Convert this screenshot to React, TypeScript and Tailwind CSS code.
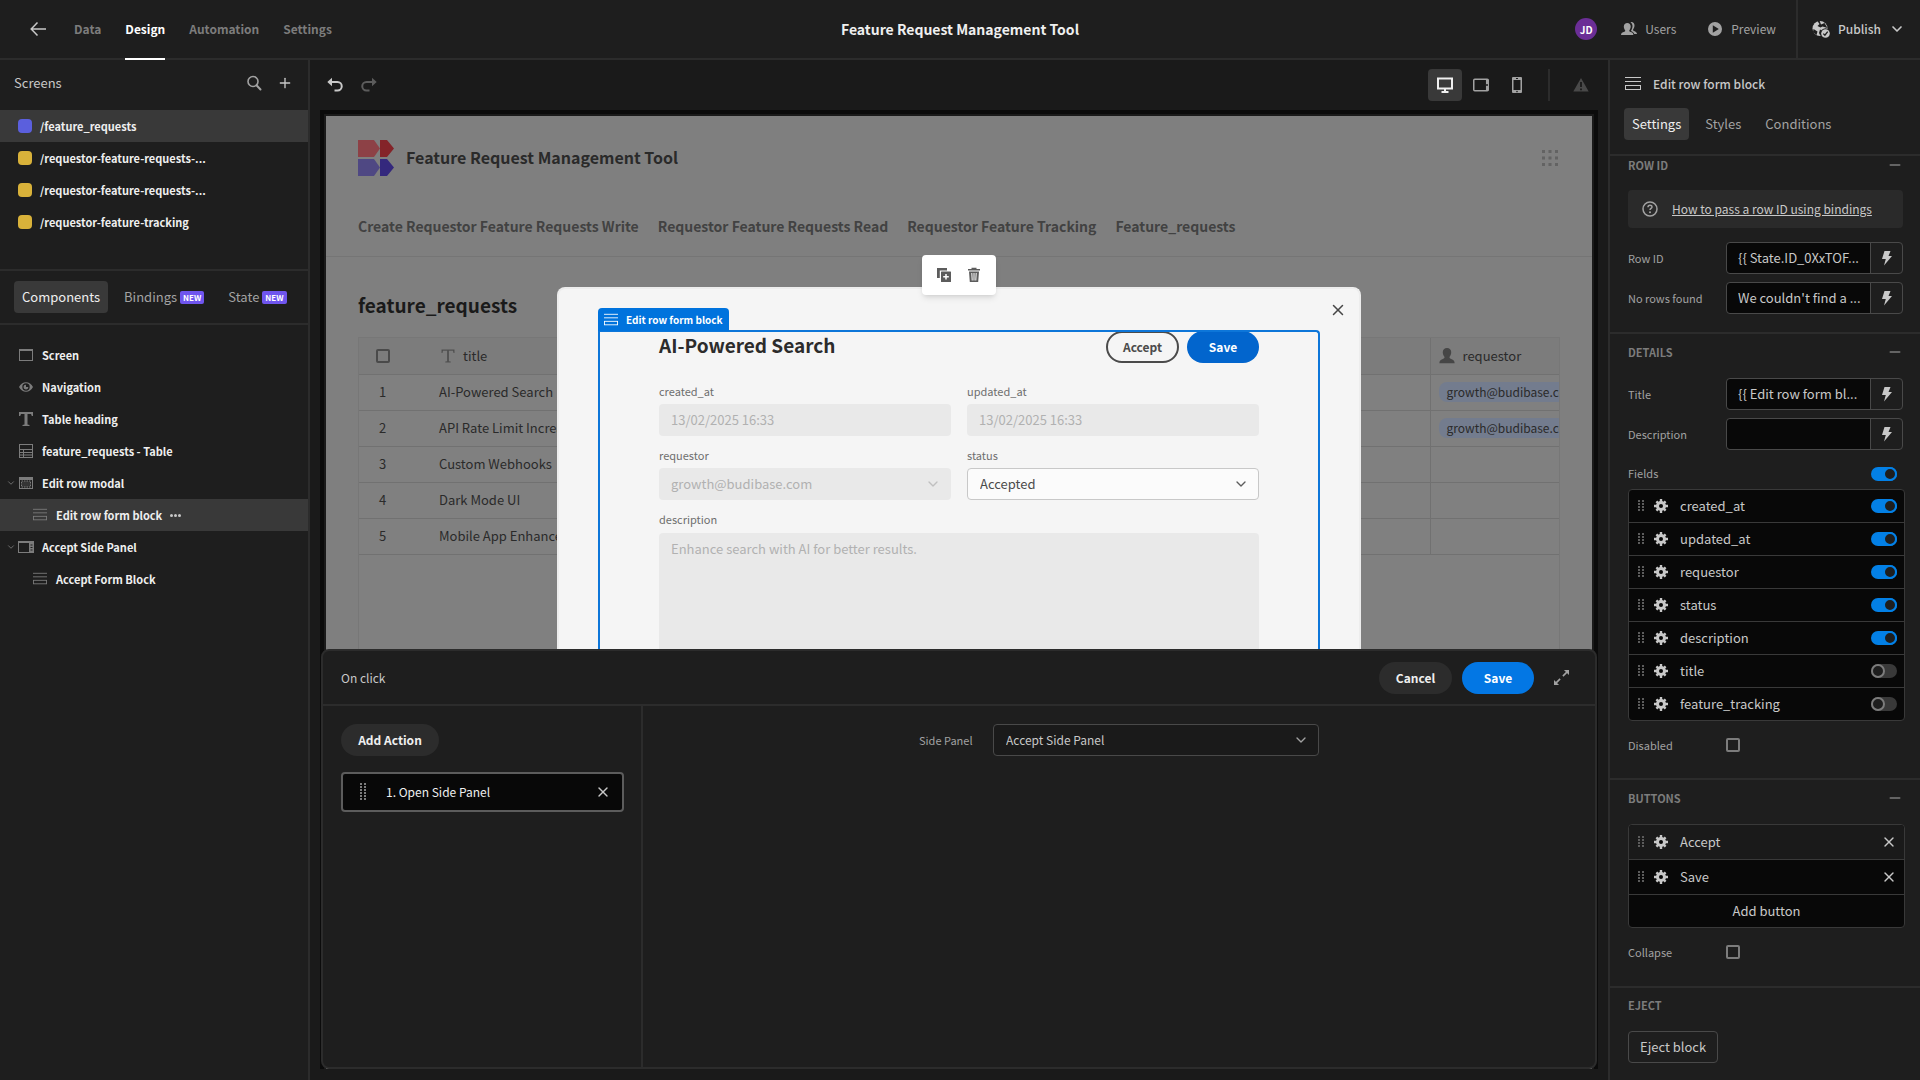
import React from 'react';
import { ChevronDown, Minus, Plus, X } from 'lucide-react';

type IconProps = { className?: string };

const BackIcon: React.FC<IconProps> = ({ className = 'w-4 h-4' }) => (
  <svg viewBox="0 0 16 16" fill="none" stroke="currentColor" strokeWidth="1.500" className={className} aria-hidden="true">
    <path d="M1 8h15M7.500 1.500L1.200 8l6.300 6.500" />
  </svg>
);

const FormIcon: React.FC<IconProps> = ({ className = 'w-4 h-4' }) => (
  <svg viewBox="0 0 16 16" fill="none" stroke="currentColor" className={className} aria-hidden="true">
    <path d="M0 1.5h16M0 5.5h16" />
    <rect x="0.5" y="9.5" width="15" height="4" />
  </svg>
);

const ScreenIcon: React.FC<IconProps> = ({ className = 'w-3.5 h-3.5' }) => (
  <svg viewBox="0 0 14 14" fill="none" stroke="currentColor" className={className} aria-hidden="true">
    <path d="M0 1h14v2H0z" fill="currentColor" stroke="none" />
    <rect x="0.5" y="1.5" width="13" height="11" />
  </svg>
);

const EyeIcon: React.FC<IconProps> = ({ className = 'w-3.5 h-3.5' }) => (
  <svg viewBox="0 0 14 14" className={className} aria-hidden="true">
    <path d="M0 7C1.500 3.800 4.200 2.200 7 2.200S12.500 3.800 14 7C12.500 10.200 9.800 11.800 7 11.800S1.500 10.200 0 7z" fill="currentColor" />
    <circle cx="7" cy="7" r="3.700" fill="#1e1e1e" />
    <path d="M7 7V4.700A2.400 2.400 0 1 0 9.300 7z" fill="currentColor" />
  </svg>
);

const TextIcon: React.FC<IconProps> = ({ className = 'w-3.5 h-3.5' }) => (
  <svg viewBox="0 0 14 14" fill="currentColor" className={className} aria-hidden="true">
    <path d="M0 0h14v4h-1.200L12 2H8.500v10.500l2 .5v1h-7v-1l2-.5V2H2l-.8 2H0z" />
  </svg>
);

const TextThinIcon: React.FC<IconProps> = ({ className = 'w-3.5 h-3.5' }) => (
  <svg viewBox="0 0 14 14" fill="currentColor" className={className} aria-hidden="true">
    <path d="M0.500 0.500h13v3.500h-1l-.5-2.200H7.900V12.300l1.800.3v.9H4.300v-.9l1.800-.3V1.800H2L1.500 4h-1z" />
  </svg>
);

const TableIcon: React.FC<IconProps> = ({ className = 'w-3.5 h-3.5' }) => (
  <svg viewBox="0 0 14 14" fill="none" stroke="currentColor" className={className} aria-hidden="true">
    <rect x="0.5" y="0.5" width="13" height="13" />
    <path d="M1 5.500h12M1 8.500h12M1 11h12M4.500 6v7.500" />
  </svg>
);

const ModalIcon: React.FC<IconProps> = ({ className = 'w-3.5 h-3.5' }) => (
  <svg viewBox="0 0 14 14" fill="none" stroke="currentColor" className={className} aria-hidden="true">
    <path d="M0 1h14v3H0z" fill="currentColor" stroke="none" />
    <rect x="0.5" y="1.5" width="13" height="11" />
    <rect x="2.5" y="5" width="9" height="6" fill="currentColor" fillOpacity="0.25" strokeDasharray="1.500 1" />
  </svg>
);

const SidePanelIcon: React.FC<IconProps> = ({ className = 'w-4 h-3.5' }) => (
  <svg viewBox="0 0 16 14" fill="none" stroke="currentColor" className={className} aria-hidden="true">
    <path d="M0 1h16v2H0z" fill="currentColor" stroke="none" />
    <rect x="0.5" y="1.5" width="15" height="11" />
    <path d="M11 3h5v10h-5z" fill="currentColor" stroke="none" />
    <path d="M12.500 5h2M12.500 7.500h2M12.500 10h2" stroke="#1e1e1e" />
  </svg>
);

const SearchIcon: React.FC<IconProps> = ({ className = 'w-4 h-4' }) => (
  <svg viewBox="0 0 16 16" fill="none" stroke="currentColor" strokeWidth="1.600" className={className} aria-hidden="true">
    <circle cx="7" cy="6.500" r="5" />
    <path d="M10.500 10.300l4 4.200" strokeWidth="2" strokeLinecap="round" />
  </svg>
);

const UndoIcon: React.FC<IconProps> = ({ className = 'w-4 h-4' }) => (
  <svg viewBox="0 0 16 16" fill="none" stroke="currentColor" strokeWidth="2" className={className} aria-hidden="true">
    <path d="M4 5h6.500a4 4 0 0 1 0 8.500H7.500" />
    <path d="M5 0.800v8.400L0.300 5z" fill="currentColor" stroke="none" />
  </svg>
);

const DesktopIcon: React.FC<IconProps> = ({ className = 'w-4 h-4' }) => (
  <svg viewBox="0 0 16 16" fill="none" stroke="currentColor" strokeWidth="2" className={className} aria-hidden="true">
    <rect x="1" y="1.500" width="14" height="10" />
    <path d="M8 12v2M4.500 15h7" />
  </svg>
);

const TabletIcon: React.FC<IconProps> = ({ className = 'w-4 h-4' }) => (
  <svg viewBox="0 0 16 16" fill="none" stroke="currentColor" strokeWidth="1.500" className={className} aria-hidden="true">
    <rect x="0.750" y="2.200" width="14.500" height="11.500" rx="1" />
    <path d="M14.200 2.500v11" strokeWidth="2.500" />
    <circle cx="14" cy="8" r="1" fill="#1a1a1a" stroke="none" />
  </svg>
);

const PhoneIcon: React.FC<IconProps> = ({ className = 'w-4 h-4' }) => (
  <svg viewBox="0 0 16 16" fill="currentColor" className={className} aria-hidden="true">
    <path fillRule="evenodd" d="M4 0h8a1 1 0 0 1 1 1v14a1 1 0 0 1-1 1H4a1 1 0 0 1-1-1V1a1 1 0 0 1 1-1zM4.500 3v10h7V3zM7 1v1h2V1zM8 13.800a.8.8 0 1 0 0 1.600.8.8 0 0 0 0-1.600z" />
  </svg>
);

const AlertIcon: React.FC<IconProps> = ({ className = 'w-4 h-4' }) => (
  <svg viewBox="0 0 16 16" className={className} aria-hidden="true">
    <path d="M8 1l7.700 13.500H0.300z" fill="currentColor" />
    <path d="M8 5v5M8 11.500v1.800" stroke="#1a1a1a" strokeWidth="1.800" />
  </svg>
);

const UsersIcon: React.FC<IconProps> = ({ className = 'w-4 h-4' }) => (
  <svg viewBox="0 0 16 16" fill="currentColor" className={className} aria-hidden="true">
    <path d="M9.500 1.200c2.400-.5 4 1 4 3.300 0 1.500-.6 2.800-1.300 3.700-.3.800 0 1.300.8 1.700 1.700.8 3 1.400 3 3.100h-2.800c-.4-1.700-1.700-2.400-3.300-3.100 1-1.400 1.600-3 1.600-4.800 0-1.600-.7-3-2-3.900z" />
    <path d="M6.300 2C8.300 2 9.700 3.300 9.700 5.500c0 1.500-.6 2.800-1.300 3.700-.3.700 0 1.200.8 1.500 1.900.7 3.200 1.200 3.200 3.300H0c0-2.100 1.500-2.600 3.300-3.300.8-.3 1.100-.8.800-1.500C3.400 8.300 2.800 7 2.800 5.500 2.800 3.300 4.300 2 6.300 2z" />
  </svg>
);

const UserIcon: React.FC<IconProps> = ({ className = 'w-3.5 h-3.5' }) => (
  <svg viewBox="0 0 14 14" fill="currentColor" className={className} aria-hidden="true">
    <path d="M7 0c2.300 0 3.700 1.500 3.700 3.800 0 1.500-.6 2.900-1.400 3.900-.3.800 0 1.300.9 1.600 2 .8 3.500 1.500 3.500 4H.3c0-2.500 1.500-3.200 3.500-4 .9-.3 1.200-.8.900-1.600-.8-1-1.400-2.400-1.400-3.900C3.300 1.500 4.700 0 7 0z" />
  </svg>
);

const PlayIcon: React.FC<IconProps> = ({ className = 'w-3.5 h-3.5' }) => (
  <svg viewBox="0 0 14 14" fill="currentColor" className={className} aria-hidden="true">
    <path fillRule="evenodd" d="M7 0a7 7 0 1 1 0 14A7 7 0 0 1 7 0zM4.800 3.300v7.400L10.800 7z" />
  </svg>
);

const GlobeIcon: React.FC<IconProps> = ({ className = 'w-[18px] h-[18px]' }) => (
  <svg viewBox="0 0 18 18" className={className} aria-hidden="true">
    <circle cx="8" cy="8.500" r="7.500" fill="currentColor" />
    <path d="M5 0.500L7.500 4 5.500 6l3 1.500 2-1 5 1.500-3-5L9 4.500 7.500 0.500zM1.500 9l4 2.500L4.500 15 1 12zM8 9.500l2 1-1.500 5.500L7 13z" fill="#1e1e1e" />
    <circle cx="13.500" cy="13.500" r="5.200" fill="#1e1e1e" />
    <circle cx="13.500" cy="13.500" r="4.300" fill="currentColor" />
    <path d="M11.300 13.600l1.600 1.600 2.800-3.500" stroke="#1e1e1e" strokeWidth="1.300" fill="none" />
  </svg>
);

const BoltIcon: React.FC<IconProps> = ({ className = 'w-4 h-4' }) => (
  <svg viewBox="0 0 16 16" fill="currentColor" className={className} aria-hidden="true">
    <path d="M5.500 1h6L9.500 6H13L5 15.500 6.800 9H3z" />
  </svg>
);

const GearIcon: React.FC<IconProps> = ({ className = 'w-3.5 h-3.5' }) => (
  <svg viewBox="-7 -7 14 14" className={className} aria-hidden="true">
    <path d="M0-7V7M-7 0H7M-4.600-4.600L4.600 4.600M-4.600 4.600L4.600-4.600" stroke="currentColor" strokeWidth="2.400" />
    <circle r="5" fill="currentColor" />
    <circle r="2" fill="#080808" />
  </svg>
);

const DragIcon: React.FC<IconProps & { rows?: number }> = ({ className = 'w-1.5 h-3', rows = 4 }) => (
  <svg viewBox={`0 0 6 ${rows * 3}`} fill="currentColor" className={className} aria-hidden="true">
    {Array.from({ length: rows }, (_, i) => (
      <path key={i} d={`M0 ${i * 3}h2v2H0zM4 ${i * 3}h2v2H4z`} />
    ))}
  </svg>
);

const HelpIcon: React.FC<IconProps> = ({ className = 'w-4 h-4' }) => (
  <svg viewBox="0 0 16 16" fill="none" stroke="currentColor" strokeWidth="1.500" className={className} aria-hidden="true">
    <circle cx="8" cy="8" r="7" />
    <path d="M6 6.200c0-2.600 4-2.400 4-.3 0 1.500-2 1.500-2 3.200" />
    <circle cx="8" cy="11.200" r="1" fill="currentColor" stroke="none" />
  </svg>
);

const DuplicateIcon: React.FC<IconProps> = ({ className = 'w-4 h-4' }) => (
  <svg viewBox="0 0 16 16" fill="none" className={className} aria-hidden="true">
    <path d="M1 11V1h10v2.500H3.800V11z" fill="currentColor" />
    <rect x="5" y="4.500" width="10" height="10.500" rx="0.500" fill="currentColor" />
    <path d="M10 7v5.500M7.200 9.800h5.600" stroke="#fff" strokeWidth="1.500" />
  </svg>
);

const TrashIcon: React.FC<IconProps> = ({ className = 'w-4 h-4' }) => (
  <svg viewBox="0 0 16 16" className={className} aria-hidden="true">
    <path d="M5.500 2V.8h5V2H14v1.500H2V2zM3 4.500h10L12.200 15H3.800z" fill="currentColor" />
    <path d="M5.800 6l.4 7.500M8 6v7.500M10.200 6l-.4 7.500" stroke="#fff" strokeWidth="1" />
  </svg>
);

const ExpandIcon: React.FC<IconProps> = ({ className = 'w-3.5 h-3.5' }) => (
  <svg viewBox="0 0 14 14" fill="none" stroke="currentColor" className={className} aria-hidden="true">
    <path d="M8.300 5.700L12 2M5.700 8.300L2 12" strokeWidth="1.500" />
    <path d="M9.300 0H14v4.700zM4.700 14H0V9.300z" fill="currentColor" stroke="none" />
  </svg>
);

const LogoMark: React.FC = () => (
  <svg viewBox="0 0 36 36" className="w-9 h-9" aria-hidden="true">
    <path d="M0 0h16l6 8.500L16 17H0z" fill="#8d4146" />
    <path d="M22 0h7l7 8.500L29 17h-7z" fill="#842429" />
    <path d="M0 19h16l6 8.500L16 36H0z" fill="#4f4883" />
    <path d="M22 19h7l7 8.500L29 36h-7z" fill="#34287d" />
  </svg>
);

const navTabs = ['Data', 'Design', 'Automation', 'Settings'];

const screens = [
  { path: '/feature_requests', color: 'bg-[#5b5fdd]', active: true },
  { path: '/requestor-feature-requests-...', color: 'bg-[#d9b23a]', active: false },
  { path: '/requestor-feature-requests-...', color: 'bg-[#d9b23a]', active: false },
  { path: '/requestor-feature-tracking', color: 'bg-[#d9b23a]', active: false }
];

const tree = [
  { label: 'Screen', icon: <ScreenIcon />, open: false, nested: false, active: false },
  { label: 'Navigation', icon: <EyeIcon />, open: false, nested: false, active: false },
  { label: 'Table heading', icon: <TextIcon />, open: false, nested: false, active: false },
  { label: 'feature_requests - Table', icon: <TableIcon />, open: false, nested: false, active: false },
  { label: 'Edit row modal', icon: <ModalIcon />, open: true, nested: false, active: false },
  { label: 'Edit row form block', icon: <FormIcon className="w-3.5 h-3.5" />, open: false, nested: true, active: true },
  { label: 'Accept Side Panel', icon: <SidePanelIcon />, open: true, nested: false, active: false },
  { label: 'Accept Form Block', icon: <FormIcon className="w-3.5 h-3.5" />, open: false, nested: true, active: false }
];

const appLinks = [
  'Create Requestor Feature Requests Write',
  'Requestor Feature Requests Read',
  'Requestor Feature Tracking',
  'Feature_requests'
];

const rows = [
  { title: 'AI-Powered Search', requestor: 'growth@budibase.com' },
  { title: 'API Rate Limit Increase', requestor: 'growth@budibase.com' },
  { title: 'Custom Webhooks', requestor: '' },
  { title: 'Dark Mode UI', requestor: '' },
  { title: 'Mobile App Enhancements', requestor: '' }
];

const fields = [
  { name: 'created_at', on: true },
  { name: 'updated_at', on: true },
  { name: 'requestor', on: true },
  { name: 'status', on: true },
  { name: 'description', on: true },
  { name: 'title', on: false },
  { name: 'feature_tracking', on: false }
];

const TopBar: React.FC = () => (
  <header className="relative flex h-[60px] shrink-0 items-stretch justify-between border-b-2 border-[#2c2c2c] bg-[#1e1e1e]">
    <nav className="flex items-stretch gap-6 pl-[30px]">
      <button aria-label="Back" className="mr-1 text-[#c8c8c8]">
        <BackIcon />
      </button>
      {navTabs.map((tab) => (
        <a
          key={tab}
          href="#"
          className={`-mb-0.5 flex items-center border-b-2 text-[12px] font-semibold ${
            tab === 'Design' ? 'border-white text-white' : 'border-transparent text-[#7c7c7c]'
          }`}
        >
          {tab}
        </a>
      ))}
    </nav>
    <h1 className="absolute left-1/2 top-0 -translate-x-1/2 text-[14px] leading-[58px] font-semibold text-[#efefef]">
      Feature Request Management Tool
    </h1>
    <div className="flex items-stretch text-[12px] text-[#a2a2a2]">
      <div className="flex items-center gap-6 pr-5">
        <span className="flex h-[22px] w-[22px] items-center justify-center rounded-full bg-[#6b2e96] text-[10px] font-bold text-white">JD</span>
        <button className="flex items-center gap-2"><UsersIcon />Users</button>
        <button className="ml-2 flex items-center gap-[9px]"><PlayIcon />Preview</button>
      </div>
      <button className="flex items-center gap-2 border-l-2 border-[#2c2c2c] pl-3.5 pr-[15px] text-[#c8c8c8]">
        <GlobeIcon />
        <span className="font-medium">Publish</span>
        <ChevronDown className="h-4 w-4" strokeWidth={2.5} />
      </button>
    </div>
  </header>
);

const NewBadge: React.FC = () => (
  <span className="rounded-xs bg-[#6f55ee] px-[3px] text-[8px] leading-[13px] font-bold text-white">NEW</span>
);

const LeftPanel: React.FC = () => (
  <aside className="flex w-[310px] shrink-0 flex-col border-r-2 border-[#2c2c2c] bg-[#1e1e1e]">
    <section className="h-[211px] border-b-2 border-[#2c2c2c]">
      <div className="flex h-[50px] items-center pb-1 pl-3.5 pr-[15px] text-[#c8c8c8]">
        <h2 className="flex-1 text-[13px]">Screens</h2>
        <button aria-label="Search" className="mr-[15px] text-[#a2a2a2]"><SearchIcon /></button>
        <button aria-label="Add screen"><Plus className="h-4 w-4" /></button>
      </div>
      {screens.map((s, i) => (
        <button
          key={i}
          className={`flex h-8 w-full items-center gap-2 pl-[18px] text-[11px] font-bold text-[#efefef] ${s.active ? 'bg-[#393939]' : ''}`}
        >
          <span className={`h-3.5 w-3.5 rounded ${s.color}`} />
          {s.path}
        </button>
      ))}
    </section>
    <div className="flex h-[54px] shrink-0 items-center border-b-2 border-[#2c2c2c] pl-3.5 text-[13px] text-[#a2a2a2]">
      <button className="h-8 rounded bg-[#393939] px-2 text-[#efefef]">Components</button>
      <button className="ml-2 flex h-8 items-center gap-[3px] px-2">
        Bindings
        <NewBadge />
      </button>
      <button className="ml-2 flex h-8 items-center gap-[3px] px-2">
        State
        <NewBadge />
      </button>
    </div>
    <ul className="pt-3.5">
      {tree.map((node) => (
        <li
          key={node.label}
          className={`flex h-8 items-center text-[11px] font-bold text-[#efefef] ${node.nested ? 'pl-8' : 'pl-[6px]'} ${node.active ? 'bg-[#393939]' : ''}`}
        >
          {!node.nested && (
            <span className="w-3 text-[#7c7c7c]">
              {node.open && <ChevronDown className="h-2.5 w-2.5" />}
            </span>
          )}
          <span className="mr-2 flex w-4 justify-center text-[#7c7c7c]">{node.icon}</span>
          {node.label}
          {node.active && (
            <button aria-label="More" className="ml-2 flex gap-px">
              <span className="h-[3px] w-[3px] rounded-full bg-[#c8c8c8]" />
              <span className="h-[3px] w-[3px] rounded-full bg-[#c8c8c8]" />
              <span className="h-[3px] w-[3px] rounded-full bg-[#c8c8c8]" />
            </button>
          )}
        </li>
      ))}
    </ul>
  </aside>
);

const Toolbar: React.FC = () => (
  <div className="flex h-[50px] shrink-0 items-center text-[#a2a2a2]">
    <button aria-label="Undo" className="ml-[17px] text-[#c8c8c8]"><UndoIcon /></button>
    <button aria-label="Redo" className="ml-[18px] text-[#5c5c5c]"><UndoIcon className="h-4 w-4 -scale-x-100" /></button>
    <div className="flex-1" />
    <button aria-label="Desktop" className="flex h-8 w-[34px] items-center justify-center rounded bg-[#393939] text-[#efefef]"><DesktopIcon /></button>
    <button aria-label="Tablet" className="ml-0.5 flex h-8 w-[34px] items-center justify-center"><TabletIcon /></button>
    <button aria-label="Mobile" className="ml-0.5 flex h-8 w-[34px] items-center justify-center"><PhoneIcon /></button>
    <span className="ml-3.5 h-8 w-0.5 bg-[#2c2c2c]" />
    <button aria-label="Problems" className="ml-[23px] mr-[19px] text-[#494949]"><AlertIcon /></button>
  </div>
);

const AppPreview: React.FC = () => (
  <div className="h-full bg-[#7f7f7f] text-[#2a2a2a]">
    <div className="border-b border-[#757575] px-8 pt-6">
      <div className="flex h-9 items-center gap-3">
        <LogoMark />
        <h2 className="flex-1 pb-0.5 text-[16px] leading-8 font-semibold">Feature Request Management Tool</h2>
        <svg viewBox="0 0 16 16" className="mr-[2px] h-4 w-4" fill="#636363" aria-hidden="true">
          <path d="M0 0h3v3H0zM6.500 0h3v3h-3zM13 0h3v3h-3zM0 6.500h3v3H0zM6.500 6.500h3v3h-3zM13 6.500h3v3h-3zM0 13h3v3H0zM6.500 13h3v3h-3zM13 13h3v3h-3z" />
        </svg>
      </div>
      <nav className="mt-9 flex gap-[19px] pb-4 text-[14px] leading-7 font-semibold text-[#424242]">
        {appLinks.map((link) => (
          <a key={link} href="#">{link}</a>
        ))}
      </nav>
    </div>
    <div className="px-8 pt-8">
      <h2 className="mb-4 text-[19px] leading-8 font-semibold text-[#1a1a1a]">feature_requests</h2>
      <div className="h-[600px] border border-[#777777] bg-[#808080]">
        <table className="w-full table-fixed border-collapse text-left text-[13px]">
          <colgroup>
            <col className="w-[70px]" />
            <col />
            <col className="w-[129px]" />
          </colgroup>
          <thead>
            <tr className="h-9 border-b border-[#717171] bg-[#7c7c7c]">
              <th className="pl-[17px]">
                <input type="checkbox" aria-label="Select all" className="block h-3.5 w-3.5 appearance-none rounded-xs border-2 border-[#4a4a4a]" />
              </th>
              <th className="pl-3 font-normal">
                <span className="flex items-center gap-2"><TextThinIcon className="h-3.5 w-3.5 text-[#505050]" />title</span>
              </th>
              <th className="border-l border-[#717171] pl-2 font-normal">
                <span className="flex items-center gap-2"><UserIcon className="h-4 w-4 text-[#464646]" />requestor</span>
              </th>
            </tr>
          </thead>
          <tbody>
            {rows.map((row, i) => (
              <tr key={row.title} className="h-9 border-b border-[#717171]">
                <td className="pl-5">{i + 1}</td>
                <td className="pl-2.5">{row.title}</td>
                <td className="overflow-hidden border-l border-[#717171] pl-2">
                  {row.requestor && (
                    <span className="block w-max rounded-lg bg-[#737c8e] px-2 text-[12px] leading-5 whitespace-nowrap">{row.requestor}</span>
                  )}
                </td>
              </tr>
            ))}
          </tbody>
        </table>
      </div>
    </div>
  </div>
);

const fieldLabel = 'block pt-[7px] pb-px leading-6';
const fieldBox = 'block h-8 w-full rounded px-3 text-[13px]';

const EditModal: React.FC = () => (
  <div className="absolute inset-x-0 top-[171px] bottom-0 mx-auto w-[804px] rounded-t-lg border-2 border-b-0 border-[#ededed] bg-[#f5f5f5] px-[39px] pt-[41px]">
    <button aria-label="Close" className="absolute right-3 top-3 text-[#464646]"><X className="h-[18px] w-[18px]" strokeWidth={2} /></button>
    <div className="relative h-full px-[61px] pt-px">
      <div className="flex h-8 items-start gap-2">
        <h3 className="flex-1 text-[19px] leading-7 font-semibold text-[#2c2c2c]">AI-Powered Search</h3>
        <button className="h-8 w-[73px] rounded-full border-2 border-[#4b4b4b] text-[12px] font-bold text-[#4b4b4b]">Accept</button>
        <button className="h-8 w-[72px] rounded-full bg-[#0265cd] text-[12px] font-bold text-white">Save</button>
      </div>
      <div className="mt-[9px] grid grid-cols-2 gap-x-4 text-[11px] text-[#6e6e6e]">
        <label>
          <span className={fieldLabel}>created_at</span>
          <input disabled value="13/02/2025 16:33" className={`${fieldBox} bg-[#e9e9e9] pb-0.5 text-[#b1b1b1]`} />
        </label>
        <label>
          <span className={fieldLabel}>updated_at</span>
          <input disabled value="13/02/2025 16:33" className={`${fieldBox} bg-[#e9e9e9] pb-0.5 text-[#b1b1b1]`} />
        </label>
        <label>
          <span className={fieldLabel}>requestor</span>
          <span className="relative block">
            <select disabled className={`${fieldBox} appearance-none bg-[#e9e9e9] text-[#b1b1b1] opacity-100`}>
              <option>growth@budibase.com</option>
            </select>
            <ChevronDown className="pointer-events-none absolute right-2.5 top-2 h-4 w-4 text-[#c0c0c0]" />
          </span>
        </label>
        <label>
          <span className={fieldLabel}>status</span>
          <span className="relative block">
            <select className={`${fieldBox} appearance-none border border-[#c8c8c8] bg-[#fbfbfb] text-[#4b4b4b]`}>
              <option>Accepted</option>
            </select>
            <ChevronDown className="pointer-events-none absolute right-2.5 top-2 h-4 w-4 text-[#5c5c5c]" />
          </span>
        </label>
        <label className="col-span-2">
          <span className={fieldLabel}>description</span>
          <textarea
            disabled
            value="Enhance search with AI for better results."
            className="mt-px block h-[180px] w-full resize-none rounded bg-[#e9e9e9] px-3 py-1.5 text-[13px] leading-5 text-[#b1b1b1]"
          />
        </label>
      </div>
      <div className="pointer-events-none absolute inset-0 rounded-tr border-2 border-b-0 border-[#0d76d9]" />
      <div className="absolute left-0 -top-[22px] flex h-[23px] items-center gap-2 rounded-t bg-[#0073dd] px-[6px] text-[10px] font-bold text-white">
        <FormIcon className="h-3.5 w-3.5" />
        Edit row form block
      </div>
    </div>
  </div>
);

const ActionPanel: React.FC = () => (
  <section className="absolute inset-x-px bottom-0 flex h-[420px] flex-col rounded-lg border-2 border-[#2c2c2c] bg-[#1e1e1e]">
    <div className="flex h-[55px] shrink-0 items-center border-b-2 border-[#2c2c2c] pl-[18px] pr-[26px] text-[12px]">
      <h3 className="flex-1 text-[#c8c8c8]">On click</h3>
      <button className="h-8 w-[73px] rounded-full bg-[#2c2c2c] font-bold text-[#efefef]">Cancel</button>
      <button className="ml-2.5 h-8 w-[72px] rounded-full bg-[#0377e4] font-bold text-white">Save</button>
      <button aria-label="Expand" className="ml-5 text-[#a2a2a2]"><ExpandIcon className="h-[15px] w-[15px]" /></button>
    </div>
    <div className="flex flex-1">
      <div className="w-80 border-r-2 border-[#2c2c2c] py-[18px] pl-[18px] pr-[17px]">
        <button className="h-8 w-[98px] rounded-full bg-[#2c2c2c] text-[12px] font-bold text-[#efefef]">Add Action</button>
        <div className="mt-4 flex h-10 items-center rounded border-2 border-[#5c5c5c] bg-[#080808] pl-[17px] pr-[11px] text-[12px] text-[#efefef]">
          <DragIcon rows={6} className="h-[18px] w-1.5 text-[#7c7c7c]" />
          <span className="ml-5 flex-1">1. Open Side Panel</span>
          <button aria-label="Remove action" className="text-[#c8c8c8]"><X className="h-4 w-4" /></button>
        </div>
      </div>
      <div className="flex-1 pt-[18px]">
        <label className="mx-auto flex w-[400px] items-center text-[11px] text-[#a2a2a2]">
          <span className="w-[74px]">Side Panel</span>
          <span className="relative flex-1">
            <select className="block h-8 w-full appearance-none rounded border border-[#494949] bg-[#1a1a1a] px-3 text-[12px] text-[#c8c8c8]">
              <option>Accept Side Panel</option>
            </select>
            <ChevronDown className="pointer-events-none absolute right-2.5 top-2 h-4 w-4 text-[#a2a2a2]" />
          </span>
        </label>
      </div>
    </div>
  </section>
);

const BindingField: React.FC<{ id: string; label: string; value: string }> = ({ id, label, value }) => (
  <div className="mb-2 flex h-8 items-center pr-[17px]">
    <label htmlFor={id} className="w-[98px] text-[11px] text-[#a2a2a2]">{label}</label>
    <div className="flex h-8 min-w-0 flex-1 rounded border border-[#494949]">
      <input id={id} defaultValue={value} className="h-full min-w-0 flex-1 rounded-l bg-[#080808] pb-0.5 pl-[11px] text-[13px] text-[#c8c8c8]" />
      <button aria-label={`Bind ${label}`} className="flex w-8 items-center justify-center border-l border-[#494949] text-[#c8c8c8]"><BoltIcon /></button>
    </div>
  </div>
);

const Toggle: React.FC<{ label: string; on: boolean }> = ({ label, on }) => (
  <input
    type="checkbox"
    role="switch"
    aria-label={label}
    defaultChecked={on}
    className="relative h-3.5 w-[26px] appearance-none rounded-full bg-[#393939] before:absolute before:left-0 before:top-0 before:h-3.5 before:w-3.5 before:rounded-full before:border-2 before:border-[#7c7c7c] before:bg-[#1e1e1e] checked:bg-[#0380e6] checked:before:left-3 checked:before:border-[#0380e6]"
  />
);

const CheckRow: React.FC<{ id: string; label: string }> = ({ id, label }) => (
  <div className="flex h-8 items-center">
    <label htmlFor={id} className="w-[98px] text-[11px] text-[#a2a2a2]">{label}</label>
    <input id={id} type="checkbox" className="h-3.5 w-3.5 appearance-none rounded-xs border-2 border-[#7c7c7c]" />
  </div>
);

const SectionTitle: React.FC<{ children: React.ReactNode; collapsible?: boolean }> = ({ children, collapsible = true }) => (
  <div className="flex h-5 items-center justify-between pr-[17px] pb-0.5 text-[#7c7c7c]">
    <h3 className="text-[11px] font-bold">{children}</h3>
    {collapsible && <button aria-label="Collapse section"><Minus className="h-4 w-4" strokeWidth={2.5} /></button>}
  </div>
);

const RightPanel: React.FC = () => (
  <aside className="flex w-[312px] shrink-0 flex-col border-l-2 border-[#2c2c2c] bg-[#1e1e1e] text-[13px] text-[#c8c8c8]">
    <div className="flex h-12 shrink-0 items-center gap-3 pl-[15px]">
      <FormIcon />
      <h2 className="text-[12px] font-medium">Edit row form block</h2>
    </div>
    <div className="flex h-12 shrink-0 items-start gap-2 border-b-2 border-[#2c2c2c] pl-3.5 text-[#a2a2a2]">
      <button className="h-8 rounded bg-[#393939] px-2 text-[#efefef]">Settings</button>
      <button className="h-8 px-2">Styles</button>
      <button className="h-8 px-2">Conditions</button>
    </div>
    <div className="min-h-0 flex-1 overflow-hidden">
      <section className="h-[178px] border-b-2 border-[#2c2c2c] pl-[18px]">
        <SectionTitle>ROW ID</SectionTitle>
        <div className="mr-[17px] mt-3.5 mb-3.5 flex h-[38px] items-center gap-3.5 rounded bg-[#2a2a2a] pl-3.5">
          <HelpIcon className="h-4 w-4 text-[#a2a2a2]" />
          <a href="#" className="text-[12px] underline">How to pass a row ID using bindings</a>
        </div>
        <BindingField id="row-id" label="Row ID" value="{{ State.ID_0XxTOF..." />
        <BindingField id="no-rows" label="No rows found" value="We couldn't find a ..." />
      </section>
      <section className="h-[446px] border-b-2 border-[#2c2c2c] pl-[18px] pt-[9px]">
        <SectionTitle>DETAILS</SectionTitle>
        <div className="mt-[15px]">
          <BindingField id="title" label="Title" value="{{ Edit row form bl..." />
          <BindingField id="description" label="Description" value="" />
        </div>
        <div className="flex h-[31px] items-center justify-between pr-[23px] text-[11px] text-[#a2a2a2]">
          Fields
          <Toggle label="All fields" on />
        </div>
        <ul className="mr-[15px] rounded border border-[#393939] bg-[#080808]">
          {fields.map((field) => (
            <li key={field.name} className="flex h-[33px] items-center border-b border-[#393939] pl-[9px] pr-[7px] last:h-8 last:border-b-0">
              <DragIcon className="h-3 w-1.5 text-[#5c5c5c]" />
              <GearIcon className="ml-[10px] h-3.5 w-3.5" />
              <span className="ml-3 flex-1">{field.name}</span>
              <Toggle label={field.name} on={field.on} />
            </li>
          ))}
        </ul>
        <div className="mt-2">
          <CheckRow id="disabled" label="Disabled" />
        </div>
      </section>
      <section className="h-[208px] border-b-2 border-[#2c2c2c] pl-[18px] pt-[9px]">
        <SectionTitle>BUTTONS</SectionTitle>
        <ul className="mr-[15px] mt-[15px] rounded border border-[#393939] bg-[#080808]">
          {['Accept', 'Save'].map((name) => (
            <li key={name} className="flex h-[35px] items-center border-b border-[#393939] pl-[9px] pr-[7px] first:rounded-t first:bg-[#1a1a1a]">
              <DragIcon className="h-3 w-1.5 text-[#5c5c5c]" />
              <GearIcon className="ml-[10px] h-3.5 w-3.5" />
              <span className="ml-3 flex-1">{name}</span>
              <button aria-label={`Remove ${name}`}><X className="h-4 w-4" /></button>
            </li>
          ))}
          <li><button className="h-8 w-full">Add button</button></li>
        </ul>
        <div className="mt-2">
          <CheckRow id="collapse" label="Collapse" />
        </div>
      </section>
      <section className="pl-[18px] pt-2">
        <SectionTitle collapsible={false}>EJECT</SectionTitle>
        <button className="mt-[15px] h-8 rounded border border-[#494949] px-[11px]">Eject block</button>
      </section>
    </div>
  </aside>
);

export default function App() {
  return (
    <div className="flex h-screen flex-col overflow-hidden bg-[#1a1a1a] font-['Noto_Sans_CJK_SC',sans-serif]">
      <TopBar />
      <div className="flex min-h-0 flex-1">
        <LeftPanel />
        <main className="flex min-w-0 flex-1 flex-col px-2.5 pb-[11px]">
          <div className="-mx-2.5">
            <Toolbar />
          </div>
          <div className="relative min-h-0 flex-1 bg-[#0b0b0b] p-1 pb-0">
            <div className="relative h-full overflow-hidden border-2 border-b-0 border-[#1a1a1a]">
              <AppPreview />
              <EditModal />
              <div className="absolute left-1/2 top-[139px] flex h-10 w-[74px] -translate-x-1/2 items-center justify-center gap-3.5 rounded bg-white text-[#5c5c5c] shadow-md">
                <button aria-label="Duplicate"><DuplicateIcon /></button>
                <button aria-label="Delete"><TrashIcon /></button>
              </div>
            </div>
            <ActionPanel />
          </div>
        </main>
        <RightPanel />
      </div>
    </div>
  );
}
